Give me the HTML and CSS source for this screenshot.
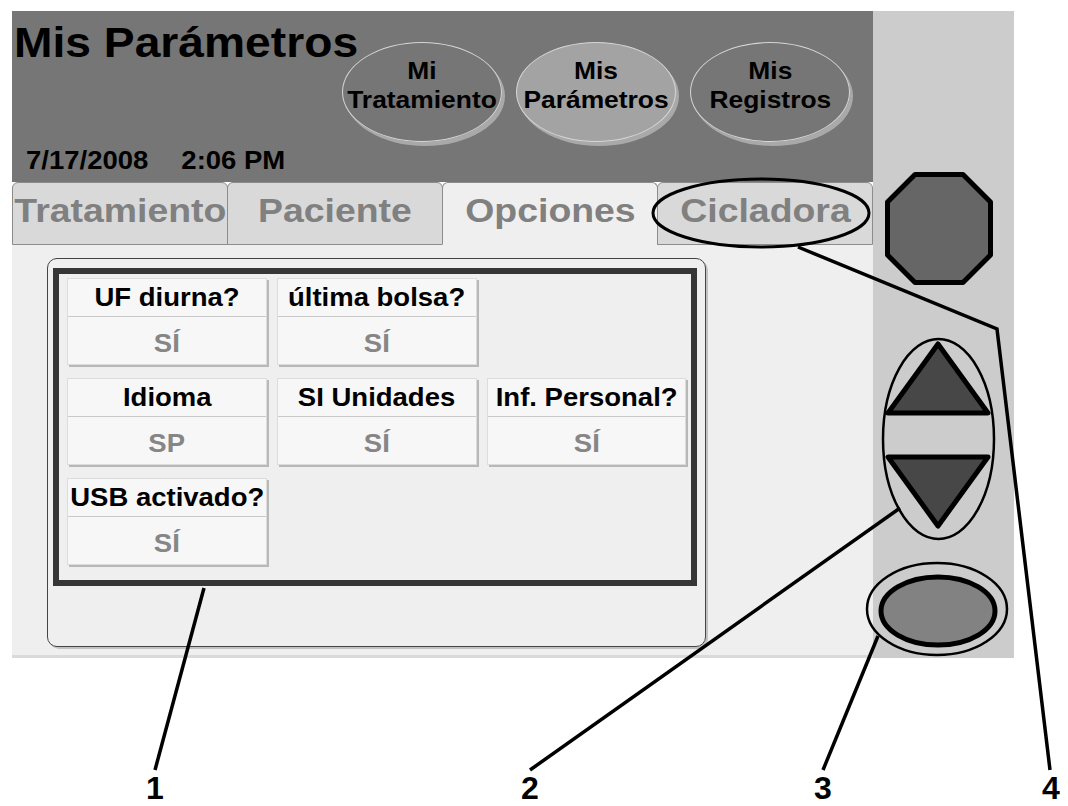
FILE: index.html
```html
<!DOCTYPE html>
<html>
  <head>
    <title>Mis Parámetros</title>
    <meta charset="UTF-8">
    <link rel="stylesheet" href="styles.css">
  </head>
  <body>
    <div class="figure">
      <div class="device">
        <div class="screen">
          <div class="header">
            <div class="headtext">
              <h1 class="title"><span class="sx">Mis Parámetros</span></h1>
              <div class="date"><span class="sx">7/17/2008<span class="gap"></span>2:06 PM</span></div>
            </div>
            <div class="ovals">
              <div class="oval"><span class="sx">Mi<br>Tratamiento</span></div>
              <div class="oval on"><span class="sx">Mis<br>Parámetros</span></div>
              <div class="oval"><span class="sx">Mis<br>Registros</span></div>
            </div>
          </div>
          <div class="tabs">
            <div class="tab"><span class="sx">Tratamiento</span></div>
            <div class="tab"><span class="sx">Paciente</span></div>
            <div class="tab active"><span class="sx">Opciones</span></div>
            <div class="tab"><span class="sx">Cicladora</span></div>
          </div>
          <div class="content">
            <div class="panel">
              <div class="box">
                <div class="grid">
                  <div class="cell">
                    <div class="cellhead"><span class="sx">UF diurna?</span></div>
                    <div class="cellval"><span class="sx">SÍ</span></div>
                  </div>
                  <div class="cell">
                    <div class="cellhead"><span class="sx">última bolsa?</span></div>
                    <div class="cellval"><span class="sx">SÍ</span></div>
                  </div>
                  <div></div>
                  <div class="cell">
                    <div class="cellhead"><span class="sx">Idioma</span></div>
                    <div class="cellval"><span class="sx">SP</span></div>
                  </div>
                  <div class="cell">
                    <div class="cellhead"><span class="sx">SI Unidades</span></div>
                    <div class="cellval"><span class="sx">SÍ</span></div>
                  </div>
                  <div class="cell">
                    <div class="cellhead"><span class="sx">Inf. Personal?</span></div>
                    <div class="cellval"><span class="sx">SÍ</span></div>
                  </div>
                  <div class="cell">
                    <div class="cellhead"><span class="sx">USB activado?</span></div>
                    <div class="cellval"><span class="sx">SÍ</span></div>
                  </div>
                </div>
              </div>
            </div>
          </div>
        </div>
        <div class="controls">
          <svg class="stop" width="108" height="113" viewBox="0 0 108 113">
            <polygon points="30,2.5 78,2.5 105.5,30 105.5,83 78,110.5 30,110.5 2.5,83 2.5,30" fill="#666" stroke="#000" stroke-width="5" stroke-linejoin="round"/>
          </svg>
          <svg class="arrows" width="108" height="190" viewBox="0 0 108 190">
            <polygon points="54,4 104,73 4,73" fill="#474747" stroke="#000" stroke-width="5" stroke-linejoin="round"/>
            <polygon points="4,117 104,117 54,186" fill="#474747" stroke="#000" stroke-width="5" stroke-linejoin="round"/>
          </svg>
          <svg class="okbtn" width="122" height="76" viewBox="0 0 122 76">
            <ellipse cx="61" cy="37" rx="57" ry="34" fill="#828282" stroke="#000" stroke-width="5"/>
          </svg>
        </div>
      </div>

      <!-- callouts -->
      <svg class="callouts" width="1068" height="806" viewBox="0 0 1068 806">
        <g fill="none" stroke="#000">
          <ellipse cx="761" cy="213" rx="108" ry="34" stroke-width="3"/>
          <polyline points="798,247 997,329 1050,770" stroke-width="3.5"/>
          <ellipse cx="938.5" cy="439" rx="55.5" ry="100" stroke-width="2.5"/>
          <line x1="900" y1="508" x2="530" y2="770" stroke-width="3.5"/>
          <ellipse cx="937" cy="609" rx="70" ry="46" stroke-width="2.5"/>
          <line x1="878" y1="636" x2="823" y2="770" stroke-width="3.5"/>
          <line x1="204" y1="588" x2="155" y2="770" stroke-width="3.5"/>
        </g>
        <text class="num" x="155" y="799">1</text>
        <text class="num" x="530" y="799">2</text>
        <text class="num" x="823" y="799">3</text>
        <text class="num" x="1051" y="799">4</text>
      </svg>
    </div>
  </body>
</html>
```

FILE: styles.css
```css
body {
  margin: 0;
  background: white;
  font-family: "Liberation Sans", Arial, sans-serif;
  font-weight: bold;
}
.figure {
  position: relative;
  width: 1068px;
  height: 806px;
  overflow: hidden;
}
/* the photo of the screen is a bit wider than the font, so stretch text */
.sx {
  display: inline-block;
  transform: scaleX(1.1);
}
.device {
  display: flex;
  margin: 11px 0 0 12px;
  width: 1002px;
  height: 647px;
}
.screen {
  width: 861px;
  display: flex;
  flex-direction: column;
}
.header {
  height: 171px;
  background: #767676;
  display: flex;
}
.headtext {
  width: 330px;
  display: flex;
  flex-direction: column;
}
.title {
  margin: 11px 0 0 2px;
  font-size: 42px;
  line-height: 42px;
  color: black;
  white-space: nowrap;
}
.title .sx, .date .sx {
  transform-origin: left center;
}
.date {
  margin: auto 0 9px 14px;
  font-size: 25px;
  line-height: 25px;
  white-space: nowrap;
}
.gap {
  display: inline-block;
  width: 30px;
}
.ovals {
  display: flex;
  gap: 14px;
  margin-top: 31px;
}
.oval {
  width: 160px;
  height: 100px;
  box-sizing: border-box;
  border-radius: 50%;
  border: 1px solid #d6d6d6;
  box-shadow: 3px 4px 0 #a9a9a9;
  display: flex;
  align-items: center;
  justify-content: center;
  padding-bottom: 14px;
  text-align: center;
  font-size: 24px;
  line-height: 29px;
  white-space: nowrap;
}
.oval.on {
  background: #a3a3a3;
}
.tabs {
  display: flex;
  height: 63px;
}
.tab {
  flex: 1;
  box-sizing: border-box;
  background: #d9d9d9;
  border: 1px solid #8c8c8c;
  border-radius: 6px 6px 0 0;
  margin-left: -1px;
  display: flex;
  align-items: center;
  justify-content: center;
  padding-bottom: 6px;
  font-size: 34px;
  color: #808080;
  white-space: nowrap;
}
.tab:first-child {
  margin-left: 0;
}
.tab.active {
  background: #efefef;
  border-bottom-color: #efefef;
}
.content {
  flex: 1;
  background: #efefef;
  padding: 13px 0 0 35px;
  border-bottom: 3px solid #dadada;
}
.panel {
  width: 659px;
  height: 389px;
  box-sizing: border-box;
  border: 1px solid #444;
  border-radius: 10px;
  box-shadow: 2px 2px 0 #c2c2c2;
  padding: 9px 0 0 5px;
}
.box {
  width: 644px;
  height: 318px;
  box-sizing: border-box;
  border: 6px solid #363636;
  padding: 4px 0 0 8px;
}
.grid {
  display: grid;
  grid-template-columns: 200px 200px 199px;
  grid-auto-rows: 87px;
  column-gap: 10px;
  row-gap: 13px;
}
.cell {
  background: #f7f7f7;
  border: 1px solid #dcdcdc;
  box-shadow: 2px 2px 0 #b8b8b8;
  display: flex;
  flex-direction: column;
  font-size: 25px;
  white-space: nowrap;
}
.cellhead {
  height: 37px;
  border-bottom: 1px solid #cacaca;
  display: flex;
  align-items: center;
  justify-content: center;
  color: black;
}
.cellval {
  flex: 1;
  display: flex;
  align-items: center;
  justify-content: center;
  padding-top: 6px;
  color: #868686;
}
.controls {
  width: 141px;
  background: #cccccc;
  padding-top: 161px;
  box-sizing: border-box;
}
.controls svg {
  display: block;
}
.stop {
  margin-left: 12px;
}
.arrows {
  margin: 55px 0 0 11px;
}
.okbtn {
  margin: 44px 0 0 4px;
}
.callouts {
  position: absolute;
  top: 0;
  left: 0;
  pointer-events: none;
}
.num {
  font-family: "Liberation Sans", Arial, sans-serif;
  font-weight: bold;
  font-size: 32px;
  text-anchor: middle;
}
```
